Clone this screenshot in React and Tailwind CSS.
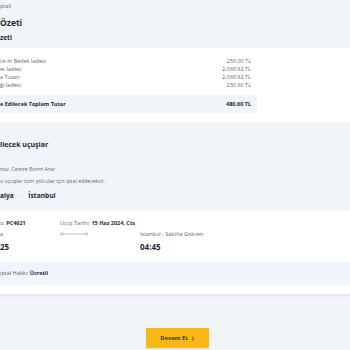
import React from "react";

const Row = ({ label, value }) => (
  <div className="flex justify-between h-[8px] items-center">
    <span>{label}</span>
    <span>{value}</span>
  </div>
);

const FlightArrow = () => (
  <svg width="29" height="6" viewBox="0 0 29 6" fill="none" className="text-[#9ca3af]">
    <circle cx="2" cy="3" r="1.3" stroke="currentColor" strokeWidth="0.7" />
    <line x1="3.3" y1="3" x2="27.5" y2="3" stroke="currentColor" strokeWidth="0.7" />
    <path d="M25.5 1.2 L27.7 3 L25.5 4.8" stroke="currentColor" strokeWidth="0.7" fill="none" />
  </svg>
);

export default function App() {
  const rows = [
    ["ck-In Bedeli İadesi", "250.00 TL"],
    ["et İadesi", "2,069.92 TL"],
    ["a Tutarı", "2,069.92 TL"],
    ["ği İadesi", "230.60 TL"],
  ];

  return (
    <div
      className="w-[350px] h-[350px] overflow-hidden bg-[#f1f4f8] text-[#5f6672] flex flex-col"
      style={{ fontFamily: '"Open Sans", "Noto Sans", sans-serif' }}
    >
      {/* Header */}
      <div className="h-[48px] flex flex-col">
        <div className="text-[5.5px] leading-[8px] mt-[2px]">ptali</div>
        <h1 className="text-[8.5px] leading-[10px] font-bold text-[#1f2937] mt-[8px]">Özeti</h1>
        <h2 className="text-[6.6px] leading-[8px] font-bold text-[#1f2937] mt-[6px]">zeti</h2>
      </div>

      {/* Price summary */}
      <div className="bg-white pt-[9px] pb-[10px]">
        <div className="w-[257px] text-[5.5px] pr-[6px]">
          {rows.map(([l, v]) => (
            <Row key={l} label={l} value={v} />
          ))}
        </div>
        <div className="w-[257px] h-[18px] mt-[6px] bg-[#f1f4f8] flex items-center justify-between pr-[6px] text-[5.5px] font-bold text-[#1f2937]">
          <span>e Edilecek Toplam Tutar</span>
          <span>480.60 TL</span>
        </div>
      </div>

      {/* Flights */}
      <div className="mt-[1px] shadow-[0_1px_3px_rgba(0,0,0,0.08)]">
        <div className="bg-[#f1f4f8] pt-[15px] pb-[7px] h-[86px] flex flex-col">
          <h3 className="text-[7px] leading-[12px] font-bold text-[#1f2937]">ilecek uçuşlar</h3>
          <div className="text-[5.3px] leading-[10px] mt-[13px]">naz. Cemre Evrim Arar</div>
          <div className="text-[5.3px] leading-[10px] mt-[2px]">u uçuşlar tüm yolcular için iptal edilecektir.</div>
          <div className="text-[6.6px] leading-[12px] mt-[4px] font-bold text-[#1f2937] flex items-center gap-[4px]">
            <span>alya</span>
            <span className="text-[#fbbf24] font-normal">→</span>
            <span>İstanbul</span>
          </div>
        </div>

        <div className="bg-white pt-[8px] pb-[8px] grid grid-cols-[60px_80px_1fr] text-[5.5px]">
          <div className="leading-[10px]">
            o: <span className="font-bold text-[#1f2937]">PC4621</span>
          </div>
          <div className="leading-[10px] col-span-2">
            Uçuş Tarihi: <span className="font-bold text-[#1f2937]">15 Haz 2024, Cts</span>
          </div>
          <div className="leading-[10px] mt-[1px]">a</div>
          <div className="flex items-center mt-[1px]">
            <FlightArrow />
          </div>
          <div className="leading-[10px] mt-[1px]">İstanbul - Sabiha Gokcen</div>
          <div className="text-[8px] leading-[14px] font-bold text-[#1f2937] mt-[1px]">25</div>
          <div />
          <div className="text-[8px] leading-[14px] font-bold text-[#1f2937] mt-[1px]">04:45</div>
        </div>

        <div className="bg-[#f1f4f8] h-[23px] flex items-center text-[5.5px]">
          iptal Hakkı:&nbsp;<span className="font-bold text-[#1f2937]">Ücretli</span>
        </div>
        <div className="bg-white h-[10px] border-b border-[#e5e7eb]" />
      </div>

      {/* Action */}
      <div className="flex justify-center mt-[33px]">
        <button className="ml-[5px] w-[63px] h-[20px] bg-[#fbb617] rounded-[1px] text-[5.8px] font-bold text-[#3b3b3b] flex items-center justify-center gap-[3px] shadow-[0_1px_2px_rgba(0,0,0,0.1)]">
          Devam Et
          <svg width="4" height="5" viewBox="0 0 4 5" fill="none">
            <path d="M1 0.6 L3 2.5 L1 4.4" stroke="#3b3b3b" strokeWidth="0.9" />
          </svg>
        </button>
      </div>
    </div>
  );
}
